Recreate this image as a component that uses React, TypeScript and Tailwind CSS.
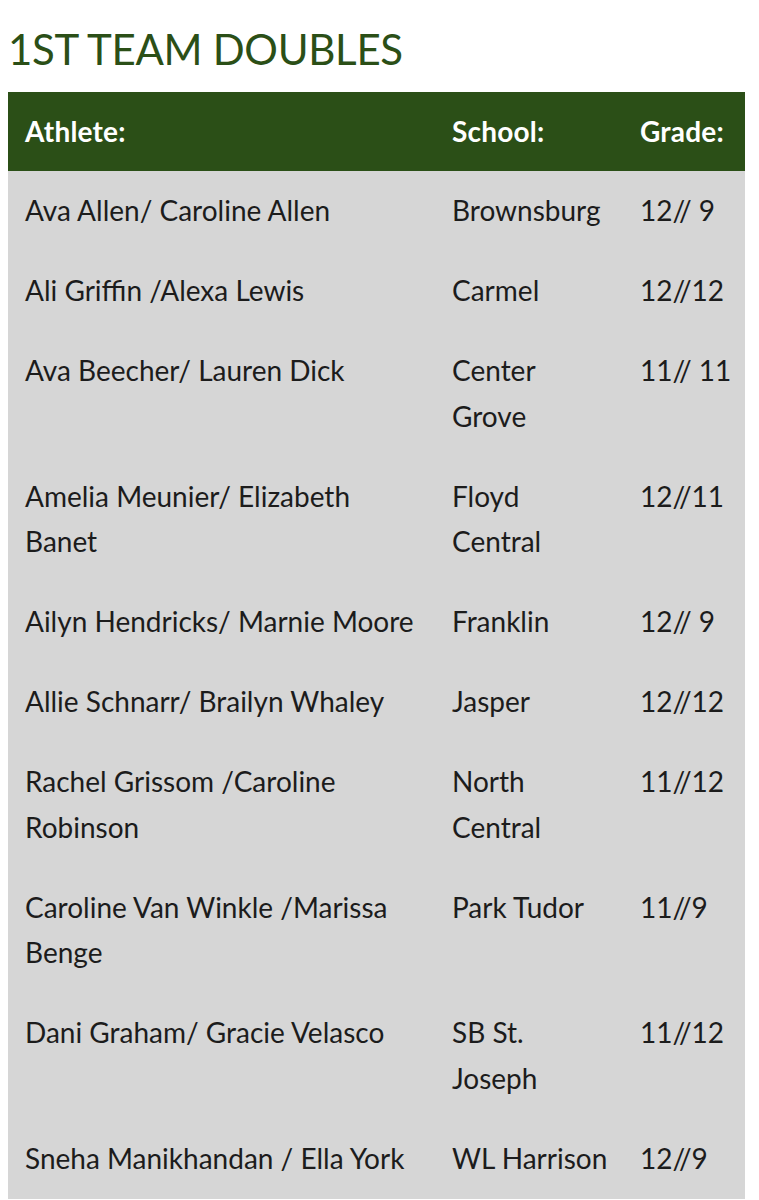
const ROWS = [
  { athlete: "Ava Allen/ Caroline Allen", school: "Brownsburg", grade: "12// 9" },
  { athlete: "Ali Griffin /Alexa Lewis", school: "Carmel", grade: "12//12" },
  { athlete: "Ava Beecher/ Lauren Dick", school: "Center Grove", grade: "11// 11" },
  { athlete: "Amelia Meunier/ Elizabeth Banet", school: "Floyd Central", grade: "12//11" },
  { athlete: "Ailyn Hendricks/ Marnie Moore", school: "Franklin", grade: "12// 9" },
  { athlete: "Allie Schnarr/ Brailyn Whaley", school: "Jasper", grade: "12//12" },
  { athlete: "Rachel Grissom /Caroline Robinson", school: "North Central", grade: "11//12" },
  { athlete: "Caroline Van Winkle /Marissa Benge", school: "Park Tudor", grade: "11//9" },
  { athlete: "Dani Graham/ Gracie Velasco", school: "SB St. Joseph", grade: "11//12" },
  { athlete: "Sneha Manikhandan / Ella York", school: "WL Harrison", grade: "12//9" },
];

export default function App() {
  return (
    <div className="min-h-[1200px] bg-white pt-[21px] font-['Lato',sans-serif] text-[#1c1c1c]">
      <h2 className="ml-[8px] text-[42px] leading-[57px] font-normal tracking-[-0.3px] text-[#2b4f17]">
        1ST TEAM DOUBLES
      </h2>
      <table className="mt-[14px] ml-[8px] w-[737px] table-fixed border-collapse text-[28px] leading-[45.5px]">
        <colgroup>
          <col className="w-[427px]" />
          <col className="w-[188px]" />
          <col className="w-[122px]" />
        </colgroup>
        <thead>
          <tr className="h-[79px] bg-[#2b4f17] text-left text-white">
            <th className="pl-[17px] font-bold tracking-[0.2px]">Athlete:</th>
            <th className="pl-[17px] font-bold tracking-[0.2px]">School:</th>
            <th className="pl-[17px] font-bold tracking-[0.2px]">Grade:</th>
          </tr>
        </thead>
        <tbody className="bg-[#d6d6d6]">
          {ROWS.map((r) => (
            <tr key={r.athlete}>
              <td className="py-[17.25px] pl-[17px] pr-[12px] align-top">{r.athlete}</td>
              <td className="py-[17.25px] pl-[17px] pr-[12px] align-top">{r.school}</td>
              <td className="py-[17.25px] pl-[17px] pr-0 align-top">{r.grade}</td>
            </tr>
          ))}
        </tbody>
      </table>
    </div>
  );
}
